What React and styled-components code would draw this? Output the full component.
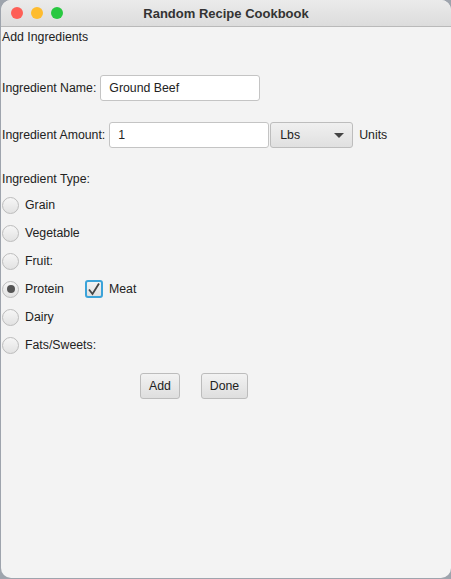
import React, { useState } from "react";
import styled, { createGlobalStyle } from "styled-components";

const GlobalStyle = createGlobalStyle`
html, body {
margin:0;
padding:0;
background:#9ea4ad;
}
body {
font-family:"Liberation Sans", Arial, sans-serif;
font-size:12.3px;
color:#222;
}
`;

const Window = styled.div`
width:450px;
height:578px;
margin-left:1px;
background:#f3f3f3;
border-radius:10px;
overflow:hidden;
display:flex;
flex-direction:column;
`;

const TitleBar = styled.div`
height:26px;
display:flex;
align-items:center;
position:relative;
background:linear-gradient(#ebebeb, #dcdcdc);
border-bottom:1px solid #b9b9b9;
`;

const Lights = styled.div`
display:flex;
gap:8px;
padding-left:10px;
`;

const Light = styled.span`
width:12px;
height:12px;
border-radius:50%;
background:${(p) => p.color};
`;

const Title = styled.div`
position:absolute;
left:0;
right:0;
text-align:center;
font-weight:bold;
font-size:13px;
color:#333;
pointer-events:none;
`;

const Content = styled.div`
display:flex;
flex-direction:column;
padding:2px 0 0 1px;
`;

const Heading = styled.div`
height:16px;
line-height:16px;
`;

const Row = styled.div`
display:flex;
align-items:center;
margin-top:${(p) => p.top}px;
height:26px;
`;

const Label = styled.span`
margin-right:4px;
`;

const Field = styled.input`
box-sizing:border-box;
width:160px;
height:26px;
padding:0 8px;
border:1px solid #c4c4c4;
border-radius:3px;
background:#fff;
font:inherit;
color:#222;
outline:none;
`;

const Combo = styled.div`
box-sizing:border-box;
width:83px;
height:26px;
display:flex;
align-items:center;
justify-content:space-between;
padding:0 8px 0 9px;
margin-left:1px;
border:1px solid #bdbdbd;
border-radius:3px;
background:linear-gradient(#f0f0f0, #e0e0e0);
margin-right:6px;
`;

const Arrow = styled.span`
width:0;
height:0;
border-left:5px solid transparent;
border-right:5px solid transparent;
border-top:5px solid #444;
`;

const TypeLabel = styled.div`
margin-top:22px;
height:18px;
line-height:18px;
`;

const RadioList = styled.div`
display:flex;
flex-direction:column;
margin-top:3px;
`;

const RadioRow = styled.label`
display:flex;
align-items:center;
height:28px;
cursor:default;
`;

const Circle = styled.span`
box-sizing:border-box;
width:17px;
height:17px;
border-radius:50%;
border:1px solid #bcbcbc;
background:linear-gradient(#f6f6f6, #e2e2e2);
display:flex;
align-items:center;
justify-content:center;
margin-right:6px;

&::after{
content:"";
width:8px;
height:8px;
border-radius:50%;
background:${(p) => (p.checked ? "#555" : "transparent")};
}
`;

const RadioText = styled.span`
width:60px;
`;

const Box = styled.span`
box-sizing:border-box;
width:18px;
height:18px;
margin:0 6px 0 0;
border:2px solid #3ba3d9;
border-radius:3px;
background:linear-gradient(#f3f3f3, #e0e0e0);
display:flex;
align-items:center;
justify-content:center;
`;

const Buttons = styled.div`
display:flex;
justify-content:center;
gap:21px;
margin-top:14px;
padding-right:65px;
`;

const Button = styled.button`
box-sizing:border-box;
height:26px;
width:${(p) => p.w}px;
padding:0;
border:1px solid #bcbcbc;
border-radius:3px;
background:linear-gradient(#f2f2f2, #dedede);
font:inherit;
color:#222;
`;

const types = ["Grain", "Vegetable", "Fruit:", "Protein", "Dairy", "Fats/Sweets:"];

function App() {
const [name, setName] = useState("Ground Beef");
const [amount, setAmount] = useState("1");
const [type, setType] = useState("Protein");
const [meat, setMeat] = useState(true);

return (
<>
<GlobalStyle />
<Window>
<TitleBar>
<Lights>
<Light color="#fe5f57" />
<Light color="#febc2e" />
<Light color="#28c840" />
</Lights>
<Title>Random Recipe Cookbook</Title>
</TitleBar>
<Content>
<Heading>Add Ingredients</Heading>

<Row top={30}>
<Label>Ingredient Name:</Label>
<Field value={name} onChange={(e) => setName(e.target.value)} />
</Row>

<Row top={21}>
<Label>Ingredient Amount:</Label>
<Field value={amount} onChange={(e) => setAmount(e.target.value)} />
<Combo>
<span>Lbs</span>
<Arrow />
</Combo>
<span>Units</span>
</Row>

<TypeLabel>Ingredient Type:</TypeLabel>

<RadioList>
{types.map((t) => (
<RadioRow key={t} onClick={() => setType(t)}>
<Circle checked={type === t} />
<RadioText>{t}</RadioText>
{t === "Protein" && (
<>
<Box onClick={() => setMeat(!meat)}>
{meat && (
<svg width="14" height="14" viewBox="0 0 14 14">
<path d="M2 7.5 L5.5 12 L12 1.5" fill="none" stroke="#444" strokeWidth="1.8" />
</svg>
)}
</Box>
<span>Meat</span>
</>
)}
</RadioRow>
))}
</RadioList>

<Buttons>
<Button w={40}>Add</Button>
<Button w={47}>Done</Button>
</Buttons>
</Content>
</Window>
</>
);
}

export default App;
